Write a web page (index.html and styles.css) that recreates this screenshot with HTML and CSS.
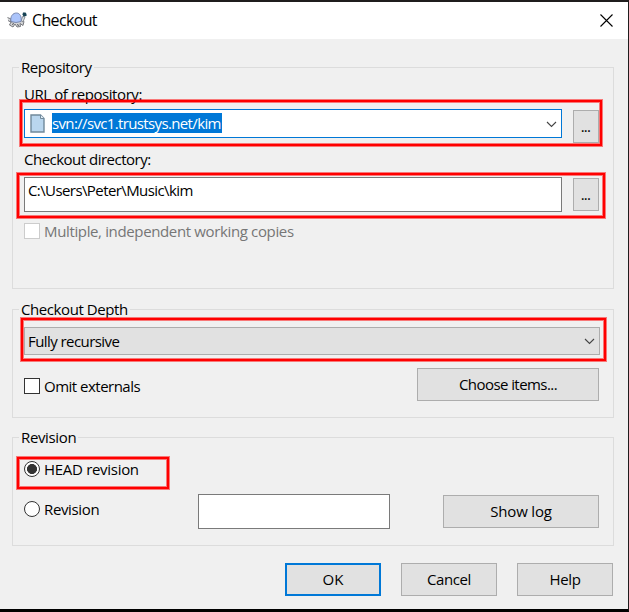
FILE: index.html
```html
<!DOCTYPE html>
<html lang="en">
<head>
<meta charset="utf-8">
<title>Checkout</title>
<link rel="stylesheet" href="styles.css">
</head>
<body>
<main class="dialog">
  <header class="titlebar">
    <svg class="turtle" width="20" height="16" viewBox="0 0 20 16">
      <path d="M.5 5.500L4 7 3.500 10 1 8.500M4 10L2.500 13 6 15 8 12 10 15 13.500 14.500 13 11.500 16 13.500 17 9.500 15 8Z" fill="#d4d5d7" stroke="#6b6d73" stroke-width=".9"/>
      <path d="M14 8.500L16 4 18 5 16 10Z" fill="#d5dcde" stroke="#777b81" stroke-width=".8"/>
      <path d="M4 9.500C3 4 6 1 9.500 1C13 1 15 5 14 9.500Q9 11.500 4 9.500Z" fill="#abc4fb" stroke="#7080a8" stroke-width=".9"/>
      <path d="M16 .5h2.500l1 1.500v2l-3 .5-1-2z" fill="#174354"/>
      <path d="M5 12.500l2-1M10 12.500l2 1" stroke="#55575b" fill="none"/>
    </svg>
    <h1 class="title">Checkout</h1>
    <svg class="close" width="13" height="13" viewBox="0 0 13 13"><path d="M.5 .5l12 12M12.500 .5l-12 12" stroke="#000" stroke-width="1.100"/></svg>
  </header>

  <section class="group repository">
    <h2 class="legend"><span class="t-repo">Repository</span></h2>
    <div class="label t-url">URL of repository:</div>
    <div class="row url-row">
      <div class="field combo">
        <svg width="15" height="19" viewBox="0 0 15 19"><path d="M1 1h9.500L14 4.500V18H1z" fill="#b9d6ee" stroke="#70899b" stroke-width="1.400"/><path d="M10.500 1v3.500H14" fill="#e3eff8" stroke="#70899b"/></svg>
        <span class="selected t-svn">svn://svc1.trustsys.net/kim</span>
        <svg class="chevron" width="11" height="7" viewBox="0 0 11 7"><path d="M1 1l4.500 4.500L10 1" fill="none" stroke="#444" stroke-width="1.100"/></svg>
      </div>
      <div class="button browse">...</div>
      <i class="mark mark-url"></i>
    </div>
    <div class="label dir-label t-dir">Checkout directory:</div>
    <div class="row dir-row">
      <div class="field path"><span class="t-path">C:\Users\Peter\Music\kim</span></div>
      <div class="button browse">...</div>
      <i class="mark mark-dir"></i>
    </div>
    <div class="option disabled multi"><i class="box"></i><span class="t-multi">Multiple, independent working copies</span></div>
  </section>

  <section class="group depth">
    <h2 class="legend"><span class="t-depth">Checkout Depth</span></h2>
    <div class="row depth-row">
      <div class="select"><span class="t-fully">Fully recursive</span>
        <svg class="chevron" width="11" height="7" viewBox="0 0 11 7"><path d="M1 1l4.500 4.500L10 1" fill="none" stroke="#444" stroke-width="1.100"/></svg>
      </div>
      <i class="mark mark-depth"></i>
    </div>
    <div class="row items-row">
      <div class="option omit"><i class="box"></i><span class="t-omit">Omit externals</span></div>
      <div class="button choose"><span class="t-choose">Choose items...</span></div>
    </div>
  </section>

  <section class="group revision">
    <h2 class="legend"><span class="t-rev">Revision</span></h2>
    <div class="row head-row">
      <div class="option"><i class="radio on"></i><span class="t-head">HEAD revision</span></div>
      <i class="mark mark-head"></i>
    </div>
    <div class="row rev-row">
      <div class="option rev-option"><i class="radio"></i><span class="t-rev">Revision</span></div>
      <div class="field number"></div>
      <div class="button log"><span class="t-log">Show log</span></div>
    </div>
  </section>

  <footer class="actions">
    <div class="button primary"><span class="t-ok">OK</span></div>
    <div class="button"><span class="t-cancel">Cancel</span></div>
    <div class="button"><span class="t-help">Help</span></div>
  </footer>
</main>
</body>
</html>
```
FILE: styles.css
```css
* { box-sizing: border-box; }
body {
  margin: 0;
  font: 15px/20px "Open Sans", "Noto Sans", sans-serif;
  color: #000;
  white-space: nowrap;
}
h1, h2 { margin: 0; font-weight: 400; }
svg { display: block; flex: none; }
.dialog {
  width: 629px;
  height: 612px;
  background: #f0f0f0;
  border: solid #1f1d1d;
  border-width: 2px 1px 3px 0;
  border-bottom-color: #000;
  overflow: hidden;
}
.titlebar {
  display: flex;
  height: 37px;
  padding: 0 15px 0 7px;
  background: #fff;
}
.turtle { margin-top: 10px; }
.title { flex: 1; margin: 8px 0 0 5px; font-size: 16px; letter-spacing: -.65px; }
.close { margin-top: 12px; }
.group {
  width: 602px;
  margin-left: 12px;
  padding: 0 0 0 11px;
  border: 1px solid #dcdcdc;
}
.repository { height: 222px; margin-top: 28px; }
.depth { height: 109px; margin-top: 20px; }
.revision { height: 109px; margin-top: 19px; }
.legend {
  width: fit-content;
  height: 20px;
  margin: -11px 0 0 -5px;
  padding: 0 2px;
  background: #f0f0f0;
  font-size: 15px;
}
.row { position: relative; display: flex; }
.label { height: 20px; margin-top: 7px; }
.field { background: #fff; border: 1px solid #7a7a7a; }
.url-row { margin-top: 5px; height: 34px; }
.combo {
  display: flex;
  align-items: flex-start;
  width: 538px;
  height: 29px;
  padding: 3px 4px 3px 5px;
  border-color: #0078d7;
}
.combo svg:first-child { margin: 1px 7px 0 0; }
.selected { width: 170px; height: 20px; background: #0078d7; color: #fff; }
.chevron { margin-left: auto; }
.combo .chevron { margin-top: 8px; }
.button {
  display: flex;
  justify-content: center;
  width: 96px;
  height: 33px;
  padding-top: 5px;
  background: #e1e1e1;
  border: 1px solid #adadad;
}
.browse { width: 26px; margin: 1px 0 0 11px; padding-right: 1px; letter-spacing: -.7px; }
.dir-label { margin-top: 6px; }
.dir-row { margin-top: 8px; height: 35px; }
.path { width: 538px; padding: 2px 3px; }
.option { display: flex; height: 20px; }
.box, .radio { width: 16px; height: 16px; margin: 2px 4px 0 0; background: #fff; border: 1px solid #333; }
.radio { border-radius: 50%; }
.radio.on { background: radial-gradient(circle, #333 4.700px, #fff 5.300px); }
.multi { margin-top: 9px; }
.disabled { color: #767676; }
.disabled .box { border-color: #ccc; }
.depth-row { margin-top: 8px; }
.select {
  display: flex;
  width: 576px;
  height: 28px;
  padding: 3px 4px 0 3px;
  background: #e1e1e1;
  border: 1px solid #adadad;
}
.select .chevron { margin-top: 7px; }
.items-row { margin-top: 13px; justify-content: space-between; width: 575px; }
.omit { margin-top: 8px; }
.choose { width: 182px; }
.head-row { margin-top: 12px; }
.rev-row { margin-top: 15px; }
.rev-option { width: 174px; margin-top: 5px; }
.number { width: 192px; height: 35px; }
.log { width: 156px; margin: 1px 0 0 53px; }
.actions { display: flex; gap: 20px; margin: 17px 0 0 285px; }
.primary { border: 2px solid #0078d7; padding-top: 4px; }
.mark {
  position: absolute;
  border: 2px solid #f00;
  box-shadow: 0 0 0 1px rgba(255, 0, 0, .5), inset 0 0 0 1px rgba(255, 0, 0, .5);
}
.mark-url { left: -4px; top: -9px; width: 582px; height: 46px; }
.mark-dir { left: -7px; top: -4px; width: 588px; height: 45px; }
.mark-depth { left: -3px; top: -9px; width: 585px; height: 43px; }
.mark-head { left: -7px; top: -2px; width: 152px; height: 32px; }
.t-repo, .t-url, .t-depth { letter-spacing: -.42px; }
.t-dir, .t-omit { letter-spacing: -.51px; }
.t-svn { letter-spacing: -.64px; }
.t-path { letter-spacing: -.59px; }
.t-multi, .t-rev { letter-spacing: -.36px; }
.t-fully, .t-choose { letter-spacing: -.57px; }
.t-log { letter-spacing: -.2px; }
.t-cancel { letter-spacing: -.4px; }
.t-head, .t-help { letter-spacing: -.3px; }
```
